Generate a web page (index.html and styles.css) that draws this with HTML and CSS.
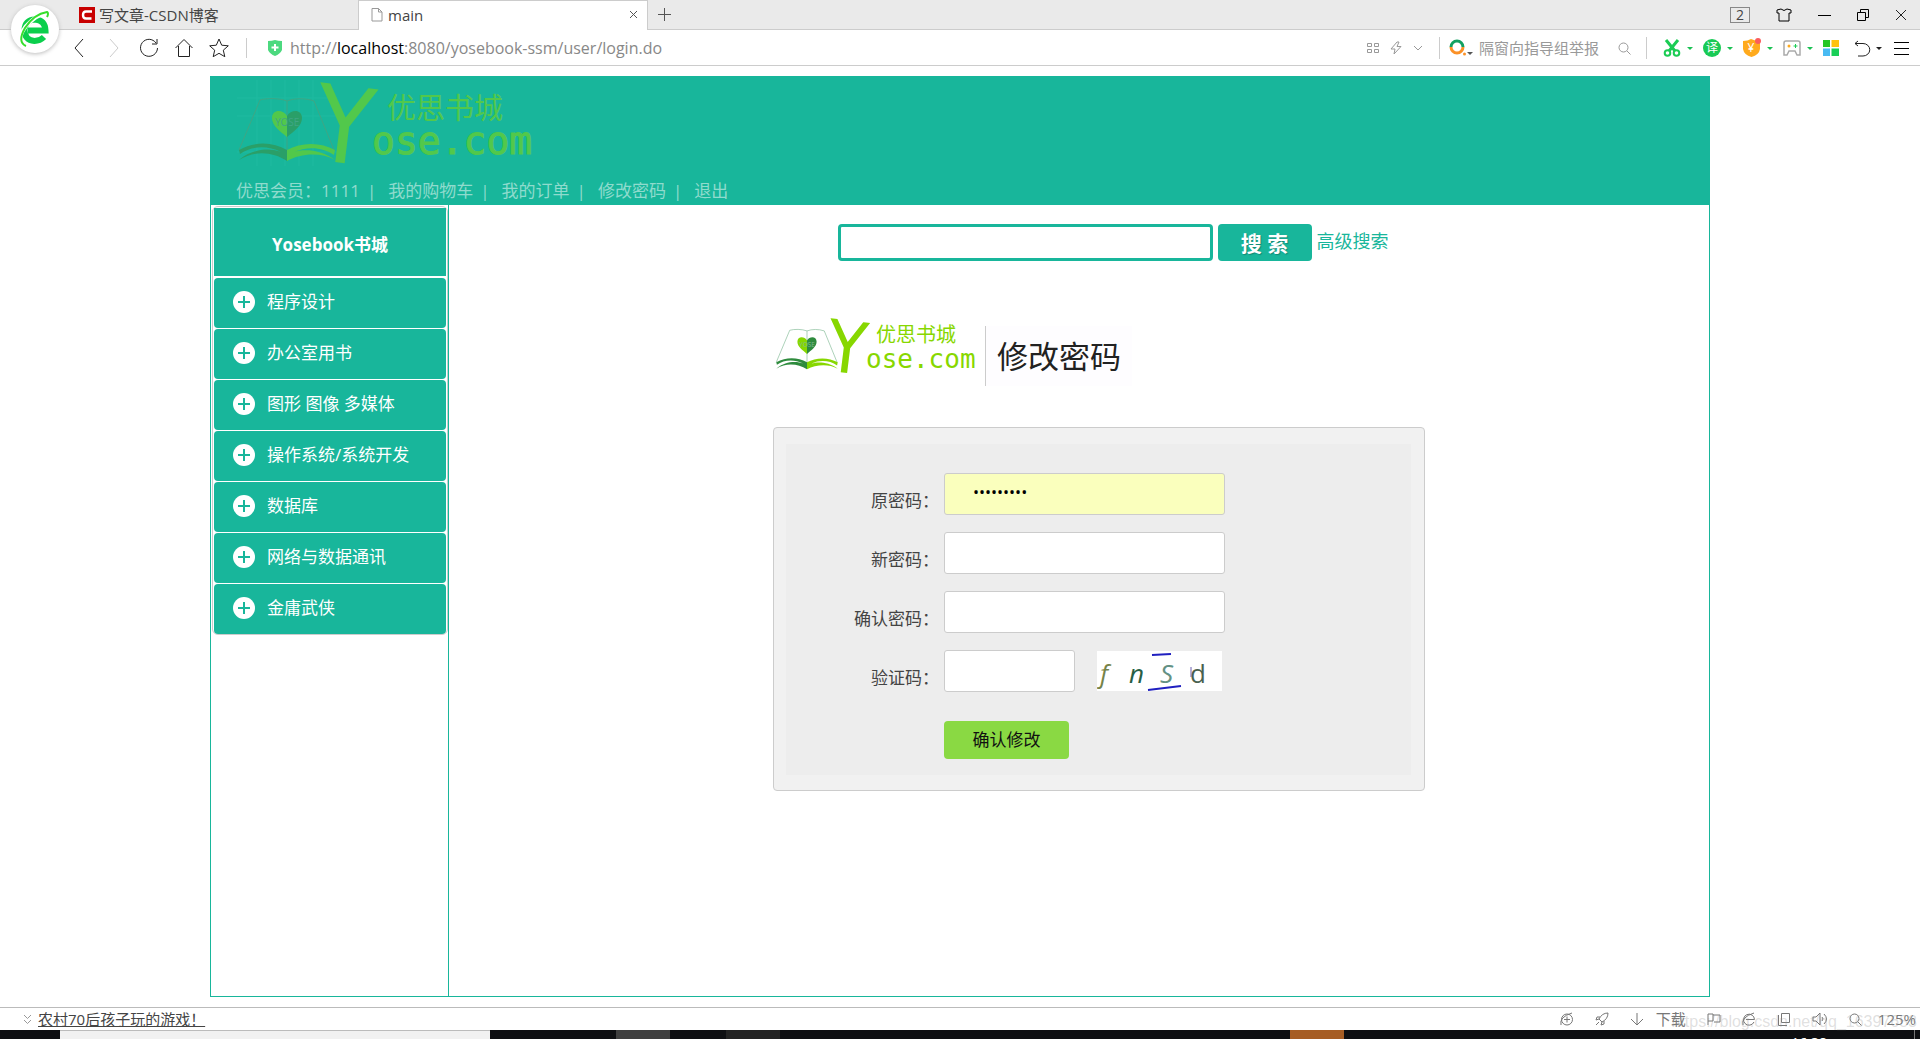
FILE: index.html
```html
<!DOCTYPE html>
<html lang="zh-CN">
<head>
<meta charset="utf-8">
<title>main</title>
<link rel="stylesheet" href="styles.css">
</head>
<body>
<svg class="defs" aria-hidden="true">
  <symbol id="book" viewBox="0 0 100 86">
    <g class="book-grid"><path d="M0 18H100M0 36H100M0 72H100M20 0V86M34 0V86M48 0V86M62 0V86M76 0V86"/></g>
    <path class="book-line" d="M50 73V21C42 18 30 18 23 20L2 70M50 21C58 18 68 18 77 21L97 70"/>
    <path class="book-dark" d="M2 70C18 61 36 62 50 70V81C36 72 18 70 2 80C16 68 34 68 44 72C30 65 14 66 3 74Z"/>
    <path class="book-light" d="M98 70C84 62 64 62 50 70V81C64 73 84 72 98 80C84 69 66 69 57 72C70 66 86 67 97 75Z"/>
    <path class="book-light" d="M50 57C43 51 35 46 35 38C35 29 46 29 50 36Z"/>
    <path class="book-dark" d="M50 57C57 51 65 46 65 38C65 29 54 29 50 36Z"/>
    <text class="book-word" x="38" y="46">YOSE</text>
  </symbol>
</svg>

<header class="browser">
  <div class="tabs">
    <a class="tab" href="#"><svg width="16" height="16" viewBox="0 0 16 16"><path fill="#c80000" d="M0 0h16v16H0z"/><path d="M13 4.500H7Q4 4.500 4 8T7 11.500H12.500" fill="none" stroke="#fff" stroke-width="2.400"/></svg>写文章-CSDN博客</a>
    <a class="tab tab-active" href="#"><svg width="12" height="14" viewBox="0 0 12 14" class="line-grey"><path d="M1 .5H7.500L11 4V13H1ZM7.500 .5V4H11"/></svg><span>main</span>
      <svg class="tab-close line" width="9" height="9" viewBox="0 0 9 9"><path d="M1 1L8 8M8 1L1 8"/></svg></a>
    <button class="icon-btn new-tab" aria-label="新标签"><svg class="line" width="13" height="13" viewBox="0 0 13 13"><path d="M6.500 0V13M0 6.500H13"/></svg></button>
    <div class="window-tools">
      <button class="icon-btn count">2</button>
      <button class="icon-btn" aria-label="皮肤"><svg class="line-black" width="16" height="14" viewBox="0 0 16 14"><path d="M1 2L5 1Q8 4 11 1L15 2V5H13V13H3V5H1Z"/></svg></button>
      <button class="icon-btn" aria-label="最小化"><svg class="line-black" width="13" height="13" viewBox="0 0 13 13"><path d="M0 7.500H13"/></svg></button>
      <button class="icon-btn" aria-label="还原"><svg class="line-black" width="12" height="12" viewBox="0 0 12 12"><path d="M.5 3.500H8.500V11.500H.5ZM3.500 3.500V.5H11.500V8.500H8.500"/></svg></button>
      <button class="icon-btn" aria-label="关闭"><svg class="line-dark" width="12" height="12" viewBox="0 0 12 12"><path d="M1 1L11 11M11 1L1 11"/></svg></button>
    </div>
  </div>
  <div class="toolbar">
    <div class="nav-tools">
      <button class="icon-btn" aria-label="后退"><svg class="line-dark" width="20" height="20" viewBox="0 0 20 20"><path d="M14 1L6 10L14 19"/></svg></button>
      <button class="icon-btn" aria-label="前进"><svg class="line-pale" width="20" height="20" viewBox="0 0 20 20"><path d="M6 1L14 10L6 19"/></svg></button>
      <button class="icon-btn" aria-label="刷新"><svg class="line-dark" width="20" height="20" viewBox="0 0 20 20"><path d="M17 5A8.500 8.500 0 1 0 18.500 10M18 1V6H13"/></svg></button>
      <button class="icon-btn" aria-label="主页"><svg class="line-dark" width="20" height="20" viewBox="0 0 20 20"><path d="M1.500 10L10 1.500L18.500 10M4.500 8V18.500H15.500V8"/></svg></button>
      <button class="icon-btn" aria-label="收藏"><svg class="line-dark" width="20" height="20" viewBox="0 0 20 20"><path d="M10 1L12.700 7.200L19.300 7.800L14.300 12.200L15.800 18.700L10 15.300L4.200 18.700L5.700 12.200L.7 7.800L7.300 7.200Z"/></svg></button>
    </div>
    <div class="address">
      <svg width="14" height="16" viewBox="0 0 14 16"><path fill="#4cd97f" d="M0 1Q4 1 7 0Q10 1 14 1V10Q12 14 7 16Q2 14 0 10Z"/><path d="M7 4V11M3.500 7.500H10.500" stroke="#fff" stroke-width="2"/></svg>
      <span class="url">http://<b>localhost</b>:8080/yosebook-ssm/user/login.do</span>
    </div>
    <div class="address-tools">
      <svg class="line-grey" width="12" height="12" viewBox="0 0 12 12"><path d="M.5 1.500h4v3h-4zM7.500 1.500h4v3h-4zM.5 7.500h4v3h-4zM7.500 7.500h4v3h-4z"/></svg>
      <svg class="line-grey" width="12" height="14" viewBox="0 0 12 14"><path d="M7 1L1 8H5L4 13L11 5.500H7L9 1Z"/></svg>
      <svg class="line-grey" width="10" height="6" viewBox="0 0 10 6"><path d="M1 1L5 5L9 1"/></svg>
    </div>
    <label class="quick-search">
      <svg width="22" height="17" viewBox="0 0 22 17"><path d="M2 7A6 6 0 0 1 14 7" fill="none" stroke="#12a060" stroke-width="3"/><path d="M2 7A6 6 0 0 0 14 7" fill="none" stroke="#fb9127" stroke-width="3"/><circle cx="15.500" cy="14" r="1.500" fill="#fb9127"/><path d="M18 12H24L21 15Z" fill="#555"/></svg>
      <input type="text" placeholder="隔窗向指导组举报" aria-label="搜索">
      <svg class="line-grey" width="13" height="13" viewBox="0 0 13 13"><circle cx="5.500" cy="5.500" r="4.500"/><path d="M9 9L12.500 12.500"/></svg>
    </label>
    <div class="extensions">
      <button class="icon-btn ext" aria-label="截图"><svg width="18" height="18" viewBox="0 0 18 18" fill="none" stroke="#1bcc54" stroke-width="2"><path d="M3 1L12 12M15 1L6 12" stroke-width="3"/><circle cx="4.500" cy="14" r="2.800"/><circle cx="13.500" cy="14" r="2.800"/></svg><i class="caret"></i></button>
      <button class="icon-btn ext" aria-label="翻译"><svg width="18" height="18" viewBox="0 0 18 18"><circle cx="9" cy="9" r="9" fill="#18ca55"/><text class="badge-text" x="9" y="13">译</text></svg><i class="caret"></i></button>
      <button class="icon-btn ext" aria-label="网银"><svg width="18" height="20" viewBox="0 0 18 20"><path d="M0 3Q5 3 8 1Q12 3 17 3V11Q16 17 8.500 19Q1 17 0 11Z" fill="#ffaa1d"/><text class="badge-text" x="8" y="14">¥</text><circle cx="15" cy="3" r="3" fill="#fa5d5d"/></svg><i class="caret"></i></button>
      <button class="icon-btn ext" aria-label="游戏"><svg width="18" height="17" viewBox="0 0 18 17"><path d="M3 1H15Q17 1 17 3V15H14L12 11H6L4 15H1V3Q1 1 3 1Z" fill="none" stroke="#aaa" stroke-width="1.500"/><circle cx="6" cy="6" r="1.500" fill="#ffaa1d"/><path d="M10.500 6H14.500M12.500 4V8" stroke="#1bcc54"/></svg><i class="caret"></i></button>
      <button class="icon-btn apps" aria-label="应用"><svg width="16" height="16" viewBox="0 0 16 16"><path fill="#25c625" d="M0 0h7v7H0z"/><path fill="#ffc20e" d="M8.500 0H16v7H8.500z"/><path fill="#49baf2" d="M0 8.500h7V16H0z"/><path fill="#19cf57" d="M8.500 8.500H16V16H8.500z"/></svg></button>
      <button class="icon-btn undo" aria-label="恢复"><svg class="line-dark" width="17" height="17" viewBox="0 0 17 17"><path d="M4 1L1 3.500L4 6M1 3.500H9A6.500 6 0 0 1 9 16H4"/></svg><i class="caret caret-dark"></i></button>
      <button class="icon-btn menu" aria-label="菜单"><svg class="line-black" width="15" height="14" viewBox="0 0 15 14"><path d="M0 1.500H15M0 7.500H15M0 13.500H15"/></svg></button>
    </div>
  </div>
  <div class="browser-logo"><svg width="32" height="38" viewBox="0 0 32 38"><g fill="none" stroke="#0bcf4c"><path d="M25 27Q21 31 15.500 31Q5.500 30 5.500 20Q6 10 16 9.500Q26 10 26.500 20.500H9" stroke-width="6"/><path d="M5 35Q-3 29 7 16Q18 4 29 3" stroke="#fff" stroke-width="4"/><path d="M7 36Q-2 32 6 18Q15 4 28 2Q30 3 28 7" stroke="#36de2b" stroke-width="2"/></g></svg></div>
</header>

<main class="page">
  <div class="site-head">
    <svg class="logo logo-head" width="310" height="96" viewBox="0 0 310 96">
      <use href="#book" x="0" y="2" width="102" height="86"/>
      <text class="logo-y" x="79" y="85" transform="rotate(7 110 50)">Y</text>
      <text class="logo-cn" x="151" y="41">优思书城</text>
      <text class="logo-en" x="136" y="76">ose.com</text>
    </svg>
    <nav class="user-nav">
      <span>优思会员：1111</span><a href="#">我的购物车</a><a href="#">我的订单</a><a href="#">修改密码</a><a href="#">退出</a>
    </nav>
  </div>
  <div class="columns">
    <aside class="sidebar">
      <div class="menu-box">
        <h1>Yosebook书城</h1>
        <ul>
          <li><a href="#"><i class="plus"></i>程序设计</a></li>
          <li><a href="#"><i class="plus"></i>办公室用书</a></li>
          <li><a href="#"><i class="plus"></i>图形 图像 多媒体</a></li>
          <li><a href="#"><i class="plus"></i>操作系统/系统开发</a></li>
          <li><a href="#"><i class="plus"></i>数据库</a></li>
          <li><a href="#"><i class="plus"></i>网络与数据通讯</a></li>
          <li><a href="#"><i class="plus"></i>金庸武侠</a></li>
        </ul>
      </div>
    </aside>
    <section class="content">
      <form class="search">
        <input type="text" aria-label="图书搜索"><button type="button">搜 索</button><a href="#">高级搜索</a>
      </form>
      <div class="password">
        <div class="password-head">
          <svg class="logo logo-form" width="212" height="68" viewBox="0 0 212 68">
            <use href="#book" x="0" y="1" width="64" height="58"/>
            <text class="logo-y" x="52" y="58" transform="rotate(7 73 34)">Y</text>
            <text class="logo-cn" x="101" y="27">优思书城</text>
            <text class="logo-en" x="91" y="53">ose.com</text>
          </svg>
          <h2>修改密码</h2>
        </div>
        <form class="panel">
          <div class="panel-inner">
            <label for="old">原密码：</label><input id="old" class="filled" type="password" value="123456789">
            <label for="new">新密码：</label><input id="new" type="password">
            <label for="again">确认密码：</label><input id="again" type="password">
            <label for="code">验证码：</label>
            <div class="code-row"><input id="code" type="text">
              <svg class="captcha" width="125" height="40" viewBox="0 0 125 40"><path fill="#fff" d="M0 0h125v40H0z"/>
                <text x="3" y="32" class="c1">f</text><text x="32" y="32" class="c2">n</text><text x="63" y="32" class="c3">S</text><text x="93" y="32" class="c4">d</text>
                <path d="M55 4L74 3M51 39L84 35" stroke="#2020c0" stroke-width="2"/><path d="M94 16V26" stroke="#6a5fb0"/></svg></div>
            <button type="button">确认修改</button>
          </div>
        </form>
      </div>
    </section>
  </div>
</main>

<footer>
  <div class="status">
    <svg class="line-grey" width="9" height="11" viewBox="0 0 9 11"><path d="M1 1L4.500 4.500L8 1M1 6L4.500 9.500L8 6"/></svg>
    <a class="news" href="#">农村70后孩子玩的游戏！</a>
    <div class="status-tools">
      <svg class="line-mid" width="14" height="14" viewBox="0 0 14 14"><circle cx="7" cy="7.500" r="5.500"/><path d="M7 4.500V10.500M4 7.500H10M1 13Q-1 5 12 1"/></svg>
      <svg class="line-mid" width="14" height="14" viewBox="0 0 14 14"><path d="M13 1Q7 1 4 7L7 10Q13 7 13 1ZM5 5H2L1 8L4 7M9 9V12L6 13L7 10M4 10L1 13"/></svg>
      <svg class="line-mid" width="14" height="14" viewBox="0 0 14 14"><path d="M7 1V13M1 7L7 13L13 7"/></svg>
      <span class="download">下载</span>
      <svg class="line-mid" width="14" height="14" viewBox="0 0 14 14"><path d="M1 13V2H6V9H1M6 3H13V10H7"/></svg>
      <svg class="line-mid" width="14" height="14" viewBox="0 0 14 14"><path d="M12 10A5.500 5.500 0 1 1 12.500 7.500H4M1 13Q-1 5 12 1"/></svg>
      <svg class="line-mid" width="14" height="14" viewBox="0 0 14 14"><path d="M4.500 1.500H12.500V10.500H4.500ZM1.500 3V13.500H10"/></svg>
      <svg class="line-mid" width="16" height="14" viewBox="0 0 16 14"><path d="M1 5H4L8 1V13L4 9H1ZM10 5Q12 7 10 9M12 2Q17 7 12 12"/></svg>
      <svg class="line-mid" width="13" height="13" viewBox="0 0 13 13"><circle cx="5.500" cy="5.500" r="4.500"/><path d="M9 9L12.500 12.500"/></svg>
      <span class="zoom-level">125%</span>
    </div>
    <span class="watermark">https://blog.csdn.net/qq_16397653</span>
  </div>
  <div class="taskbar"><i class="task-search"></i><i class="task-app"></i><i class="task-app task-dim"></i><i class="task-alert"></i><time>16:38</time><i class="task-edge"></i></div>
</footer>
</body>
</html>
```
FILE: styles.css
```css
* { box-sizing: border-box; }
:root { --teal: #18b69b; --green: #52c84b; }
body {
  margin: 0;
  min-height: 100vh;
  display: flex;
  flex-direction: column;
  background: #fff;
  color: #444;
  font: 17px/24px "Open Sans", "Noto Sans CJK SC", sans-serif;
}
a { color: inherit; text-decoration: none; }
svg { display: block; flex: none; }
input, button { font: inherit; color: inherit; margin: 0; }
.defs { position: absolute; width: 0; height: 0; }
.line, .line-black, .line-dark, .line-mid, .line-grey, .line-pale { fill: none; stroke: #555; stroke-width: 1; }
.line-black { stroke: #000; }
.line-dark { stroke: #222; }
.line-mid { stroke: #777; }
.line-grey { stroke: #999; }
.line-pale { stroke: #ccc; }
.icon-btn {
  display: flex;
  align-items: center;
  justify-content: center;
  padding: 0;
  border: 0;
  background: none;
}

/* Browser frame */
.browser { position: relative; font-size: 15px; line-height: 20px; }
.tabs { display: flex; height: 30px; padding-left: 79px; background: #eaeaea; border-bottom: 1px solid #ccc; }
.tab { display: flex; align-items: center; gap: 4px; width: 279px; }
.tab-active {
  gap: 5px;
  width: 290px;
  height: 30px;
  padding: 0 9px 2px 12px;
  background: #fff;
  border: 1px solid #ccc;
  border-bottom: 0;
}
.tab-close { margin-left: auto; }
.new-tab { width: 32px; }
.window-tools { display: flex; align-items: center; gap: 26px; margin-left: auto; padding-right: 13px; }
.count { width: 20px; height: 16px; border: 1px solid #888; font-size: 14px; line-height: 14px; }
.toolbar {
  display: flex;
  align-items: center;
  height: 36px;
  padding: 1px 11px 0 69px;
  border-bottom: 1px solid #ccc;
}
.nav-tools { display: flex; gap: 15px; padding-right: 17px; border-right: 1px solid #ccc; }
.address { display: flex; align-items: center; gap: 8px; flex: 1; padding-left: 21px; }
.url { font-size: 16px; color: #888; }
.url b { font-weight: 400; color: #000; }
.address-tools { display: flex; align-items: center; gap: 11px; padding-right: 16px; }
.quick-search { display: flex; align-items: center; height: 22px; padding: 0 15px 0 9px; border: solid #ccc; border-width: 0 1px; }
.quick-search input { width: 147px; padding: 0 0 0 8px; border: 0; outline: 0; background: none; }
.quick-search svg:first-child { overflow: visible; }
.quick-search input::placeholder { color: #999; opacity: 1; }
.extensions { display: flex; align-items: center; padding-left: 16px; }
.ext { width: 40px; gap: 6px; justify-content: flex-start; }
.apps { width: 31px; justify-content: flex-start; }
.undo { width: 40px; gap: 5px; justify-content: flex-start; }
.caret { border: 3px solid transparent; border-top-color: #19c152; border-bottom: 0; }
.caret-dark { border-top-color: #222; }
.badge-text { fill: #fff; font-size: 12px; text-anchor: middle; }
.browser-logo {
  position: absolute;
  left: 11px;
  top: 5px;
  display: grid;
  place-items: center;
  width: 48px;
  height: 48px;
  border-radius: 50%;
  background: #fff;
  box-shadow: 0 1px 4px #bbb;
}

/* Site header */
.page {
  flex: 1;
  display: flex;
  flex-direction: column;
  width: calc(100% - 40px);
  max-width: 1500px;
  margin: 10px auto;
  border: 1px solid var(--teal);
  border-top: 0;
}
.site-head { padding: 2px 25px 0; background: var(--teal); color: #8fdbcd; }
.user-nav { display: flex; padding: 5px 0 2px; }
.user-nav > * + *::before { content: "|"; margin: 0 12px 0 7px; }
.logo, .logo use, #book { overflow: visible; }
.logo text { fill: var(--light); }
.logo .logo-y { font-family: "DejaVu Sans Condensed", "DejaVu Sans", sans-serif; font-size: 106px; }
.logo .logo-cn { font-family: "Noto Sans CJK SC", sans-serif; font-size: 29px; }
.logo .logo-en { font-family: "DejaVu Sans Mono", monospace; font-size: 38px; stroke: var(--light); stroke-width: 1px; }
.logo-head { --dark: #2a9f68; --light: #52c84b; --line: #3fa684; --grid: #1fbaa0; }
.logo-form { --dark: #2e8b3d; --light: #87d700; --line: #7eb892; --grid: transparent; }
.book-grid { fill: none; stroke: var(--grid); }
.book-line { fill: none; stroke: var(--line); stroke-width: 1; }
.book-dark { fill: var(--dark); }
.book-light { fill: var(--light); }
.book-word { fill: var(--line); font-size: 10px; }

/* Sidebar */
.columns { flex: 1; display: flex; }
.sidebar { width: 238px; padding: 1px 0 0 1px; border-right: 1px solid var(--teal); }
.menu-box { border: 1px solid #ccc; border-radius: 6px; padding: 1px 1px 0; }
.menu-box h1 {
  margin: 0 0 2px;
  padding: 25px 0 19px;
  background: var(--teal);
  color: #fff;
  font-size: 17px;
  line-height: 24px;
  text-align: center;
}
.menu-box ul { display: grid; gap: 1px; margin: 0; padding: 0; list-style: none; }
.menu-box li a {
  display: flex;
  align-items: center;
  gap: 12px;
  height: 50px;
  padding: 0 0 2px 19px;
  border-radius: 4px;
  background: var(--teal);
  color: #fff;
}
.plus {
  width: 22px;
  height: 22px;
  border-radius: 50%;
  background:
    linear-gradient(var(--teal), var(--teal)) center / 12px 2px no-repeat,
    linear-gradient(var(--teal), var(--teal)) center / 2px 12px no-repeat,
    #fff;
}

/* Content */
.content { flex: 1; padding: 19px 0 0 40px; }
.search { display: flex; align-items: center; justify-content: center; gap: 5px; padding-left: 28px; }
.search input { width: 375px; height: 37px; border: 3px solid var(--teal); border-radius: 4px; padding: 0 8px; }
.search button {
  width: 94px;
  height: 37px;
  padding: 0;
  border: 0;
  border-radius: 4px;
  background: var(--teal);
  color: #fff;
  font-size: 21px;
  font-weight: 700;
  text-shadow: 1px 1px 1px #128a75;
}
.search a { padding-bottom: 3px; color: var(--teal); font-size: 18px; }
.password { width: 652px; max-width: 100%; margin: 54px auto 0; }
.password-head { display: flex; align-items: flex-end; height: 71px; padding-left: 2px; }
.password-head .logo { align-self: flex-start; margin-right: -2px; }
.password-head h2 {
  margin: 0;
  height: 60px;
  padding: 0 11px;
  border-left: 1px solid #ccc;
  background: #fefdff;
  color: #222;
  font-size: 31px;
  font-weight: 400;
  line-height: 60px;
}
.logo-form .logo-y { font-size: 72px; }
.logo-form .logo-cn { font-size: 20px; }
.logo-form .logo-en { font-size: 26px; stroke-width: 0; }
.panel { margin-top: 41px; padding: 16px 13px 15px 12px; border: 1px solid #ccc; border-radius: 4px; background: #f1f1f1; }
.panel-inner {
  display: grid;
  grid-template-columns: 153px 281px;
  gap: 17px 5px;
  padding: 29px 0 16px;
  background: #ededed;
}
.panel label { padding-top: 14px; text-align: right; line-height: 28px; }
.panel input { width: 100%; height: 42px; padding: 0 28px 4px; border: 1px solid #ccc; border-radius: 3px; background: #fff; color: #000; font-size: 16px; }
.panel .filled { background: #faffbd; }
.code-row { display: flex; align-items: center; gap: 22px; }
.code-row input { width: 131px; }
.panel button {
  grid-column: 2;
  width: 125px;
  height: 38px;
  margin-top: 12px;
  padding: 0;
  border: 0;
  border-radius: 4px;
  background: #8ad943;
  color: #111;
}
.captcha text { font-size: 26px; }
.captcha .c1 { fill: #768348; font-style: italic; }
.captcha .c2 { fill: #285f46; font-style: italic; }
.captcha .c3 { fill: #649184; font-style: italic; }
.captcha .c4 { fill: #49614f; }

/* Status bar and taskbar */
.status {
  position: relative;
  display: flex;
  align-items: center;
  gap: 6px;
  height: 23px;
  padding: 0 4px 0 23px;
  border-top: 1px solid #bbb;
  font-size: 15px;
  line-height: 20px;
}
.news { text-decoration: underline; }
.status-tools { display: flex; align-items: center; gap: 21px; margin-left: auto; color: #777; }
.download { margin-left: -9px; }
.zoom-level { margin-left: -5px; }
.watermark { position: absolute; right: 3px; top: 4px; color: rgba(150, 150, 150, .3); font: 16px/20px "Liberation Sans", "Noto Sans CJK SC", sans-serif; }
.taskbar { display: flex; height: 9px; overflow: hidden; padding-left: 60px; background: #0e0f12; }
.task-search { width: 430px; border-top: 1px solid #bbb; background: #f1f1f1; }
.task-app { width: 54px; margin-left: 126px; background: #3f3f3f; }
.task-dim { margin-left: 56px; background: #222; }
.task-alert { width: 54px; margin-left: 510px; background: #a65d24; }
.taskbar time { margin: 5px 87px 0 auto; color: #fff; font-size: 14px; line-height: 16px; }
.task-edge { width: 1px; margin-right: 5px; background: #777; }
```
